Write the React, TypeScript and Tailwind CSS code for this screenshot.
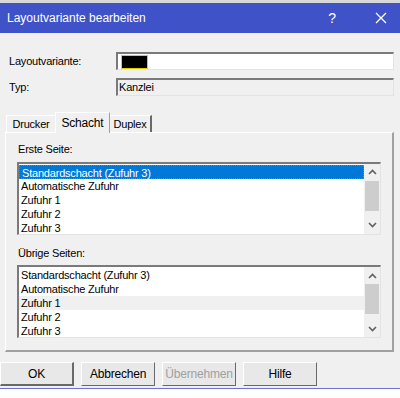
import clsx from 'clsx'

const ui = "font-['Liberation_Sans',Arial,sans-serif] text-[11px] tracking-[-0.2px] text-black"

const Scrollbar = () => (
  <div className="flex w-[16px] flex-col bg-[#f0f0f0]">
    <div className="flex h-[17px] items-center justify-center">
      <svg width="9" height="6" viewBox="0 0 9 6">
        <path d="M1 5 L4.5 1.5 L8 5" fill="none" stroke="#606060" strokeWidth="1.6" />
      </svg>
    </div>
    <div className="mx-[1px] h-[30px] bg-[#cdcdcd]" />
    <div className="flex-1" />
    <div className="flex h-[17px] items-center justify-center">
      <svg width="9" height="6" viewBox="0 0 9 6">
        <path d="M1 1 L4.5 4.5 L8 1" fill="none" stroke="#606060" strokeWidth="1.6" />
      </svg>
    </div>
  </div>
)

const ListBox = ({
  selected,
  hover,
}: {
  selected?: number
  hover?: number
}) => {
  const items = [
    'Standardschacht (Zufuhr 3)',
    'Automatische Zufuhr',
    'Zufuhr 1',
    'Zufuhr 2',
    'Zufuhr 3',
  ]
  return (
    <div className="flex h-[73px] border-t-2 border-l-2 border-t-[#7a7a7a] border-l-[#7a7a7a] border-r border-b border-r-[#e3e3e3] border-b-[#e3e3e3] bg-white">
      <div className="flex flex-1 flex-col pt-[1px]">
        {items.map((item, i) => (
          <div
            key={item}
            className={clsx(
              'h-[14px] pl-[2px] leading-[14px]',
              i === selected &&
                'border border-dotted border-[#b07040] bg-[#0078d7] pl-[1px] leading-[12px] text-white',
              i === hover && 'bg-[#f0f0f0]',
            )}
          >
            {item}
          </div>
        ))}
      </div>
      <Scrollbar />
    </div>
  )
}

const Button = ({
  label,
  disabled,
  primary,
}: {
  label: string
  disabled?: boolean
  primary?: boolean
}) => (
  <button
    className={clsx(
      'h-[24px] w-[74px] border border-t-[#ffffff] border-l-[#ffffff] border-r-[#696969] border-b-[#696969] bg-[#e8e8e8] text-[12px]',
      primary && 'border-r-2 border-b-2 border-r-[#404040] border-b-[#404040]',
      disabled ? 'text-[#a0a0a0]' : 'text-black',
    )}
  >
    {label}
  </button>
)

export default function App() {
  return (
    <div className={clsx(ui, 'flex h-[398px] w-[400px] flex-col bg-[#f0f0f0]')}>
      <div className="h-[3px] bg-[#d9d9d9]" />
      <div className="flex h-[30px] items-center bg-[#4052c8] pl-[7px] pr-[13px] text-[12px] tracking-normal text-white">
        <span className="flex-1">Layoutvariante bearbeiten</span>
        <span className="mr-[39px] text-[14px]">?</span>
        <svg width="12" height="12" viewBox="0 0 12 12">
          <path d="M1 1 L11 11 M11 1 L1 11" stroke="white" strokeWidth="1.3" />
        </svg>
      </div>

      <div className="flex flex-col gap-[8px] pt-[19px] pr-[6px] pl-[9px]">
        <div className="flex items-center">
          <span className="w-[107px]">Layoutvariante:</span>
          <div className="flex h-[18px] flex-1 items-center border-t-2 border-l-2 border-t-[#7a7a7a] border-l-[#7a7a7a] border-r border-b border-r-[#e3e3e3] border-b-[#e3e3e3] bg-white pl-[3px]">
            <div className="h-[14px] w-[27px] border border-[#e0d000] bg-black" />
          </div>
        </div>
        <div className="flex items-center">
          <span className="w-[107px]">Typ:</span>
          <div className="flex h-[18px] flex-1 items-center border-t-2 border-l-2 border-t-[#7a7a7a] border-l-[#7a7a7a] border-r border-b border-r-[#e3e3e3] border-b-[#e3e3e3] bg-[#f0f0f0] pl-[1px]">
            Kanzlei
          </div>
        </div>
      </div>

      <div className="mt-[16px] flex flex-col px-[5px] pr-[6px]">
        <div className="flex items-end pl-[1px]">
          <div className="flex h-[17px] w-[49px] items-center justify-center border-t border-l border-t-white border-l-white">
            Drucker
          </div>
          <div className="relative z-10 -mb-[1px] flex h-[21px] w-[55px] items-center justify-center border-t border-l border-r border-t-white border-l-white border-r-[#a0a0a0] bg-[#f0f0f0] text-[12px]">
            Schacht
          </div>
          <div className="flex h-[17px] w-[42px] items-center justify-center border-t border-r-2 border-t-white border-r-[#696969]">
            Duplex
          </div>
        </div>
        <div className="flex h-[220px] flex-col border-t border-l border-r-2 border-b-2 border-t-white border-l-white border-r-[#a0a0a0] border-b-[#a0a0a0] px-[11px] pt-[8px]">
          <div className="mb-[4px] pl-[1px]">Erste Seite:</div>
          <ListBox selected={0} />
          <div className="mt-[10px] mb-[4px] pl-[1px]">Übrige Seiten:</div>
          <ListBox hover={2} />
        </div>
      </div>

      <div className="mt-[10px] flex gap-[7px]">
        <Button label="OK" primary />
        <Button label="Abbrechen" />
        <Button label="Übernehmen" disabled />
        <Button label="Hilfe" />
      </div>
      <div className="mt-[2px] h-[1px] bg-[#6a74d0]" />
      <div className="flex-1 bg-white" />
    </div>
  )
}
